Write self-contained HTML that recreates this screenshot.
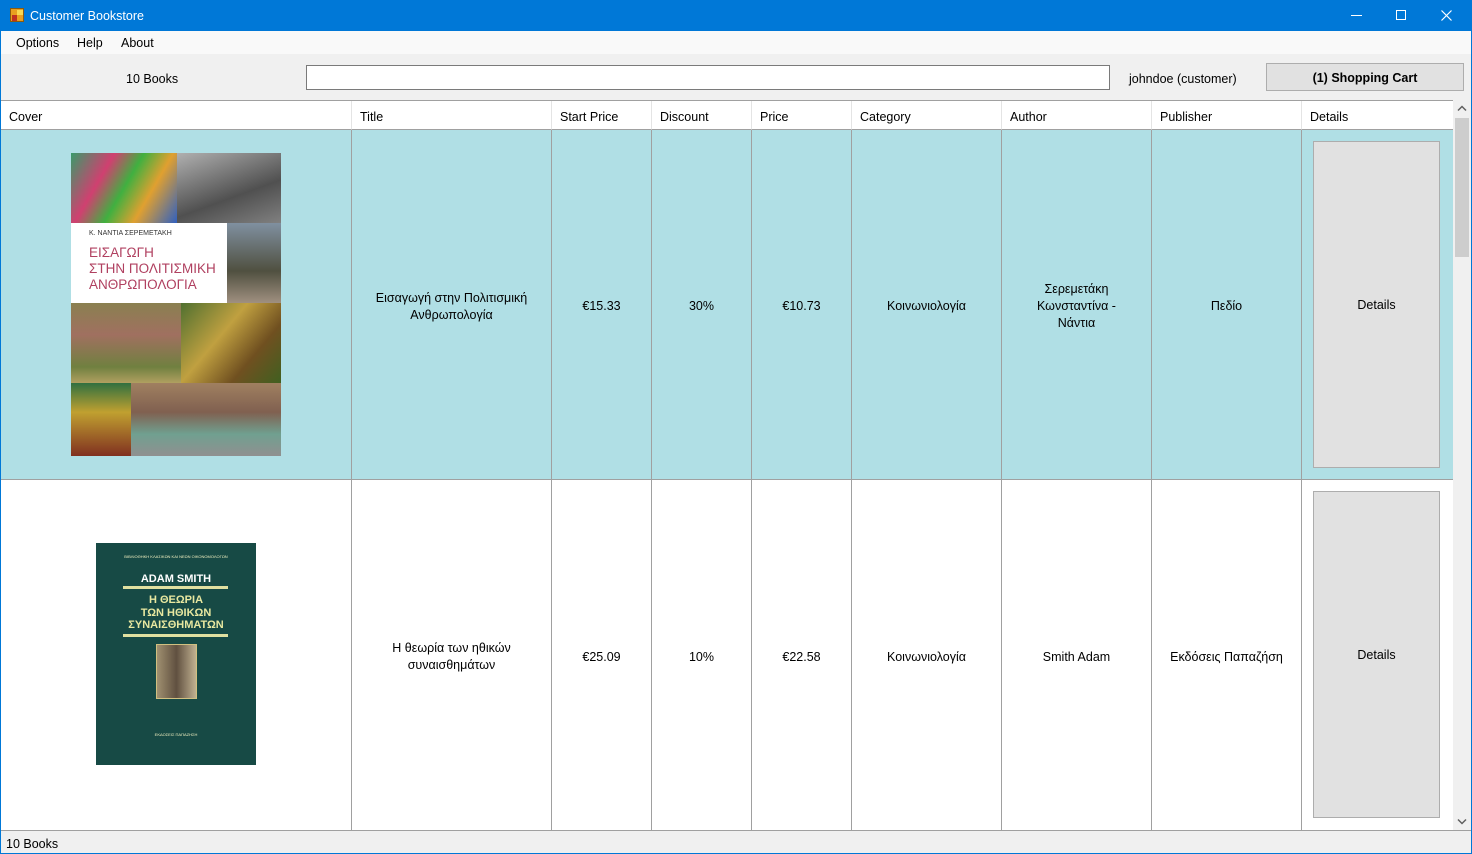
<!DOCTYPE html>
<html><head><meta charset="utf-8"><style>
*{box-sizing:border-box;margin:0;padding:0}
body{width:1472px;height:854px;overflow:hidden;background:#f0f0f0;font-family:"Liberation Sans","DejaVu Sans",sans-serif;font-size:12.5px;color:#000;position:relative}
.a{position:absolute}
.title{left:0;top:0;width:1472px;height:31px;background:#0078d7;color:#fff}
.menu{left:1px;top:31px;width:1470px;height:23px;background:#f9f9f9}
.grid{left:1px;top:100px;width:1452px;height:730px;background:#fff;border-top:1px solid #a0a0a0;overflow:hidden}
.hd{top:0;height:29px;border-right:1px solid #e4e4e4;border-bottom:1px solid #a0a0a0;padding:9px 0 0 8px;background:#fff}
.cell{border-right:1px solid #a0a0a0;border-bottom:1px solid #a0a0a0;display:flex;align-items:center;justify-content:center;text-align:center;line-height:17px;padding-top:4px}
.sel{background:#b0dfe5}
.btn{background:#e1e1e1;border:1px solid #adadad}
</style></head><body>
<div class="a title">
 <div class="a" style="left:10px;top:8px;width:14px;height:14px;background:#e8a020;border:1px solid #8a5a10"><div class="a" style="left:1px;top:6px;width:5px;height:6px;background:#c03020"></div><div class="a" style="left:6px;top:1px;width:6px;height:5px;background:#f8d850"></div></div>
 <div class="a" style="left:30px;top:9px;font-size:12.5px">Customer Bookstore</div>
 <div class="a" style="left:1351px;top:15px;width:11px;height:1px;background:#fff"></div>
 <div class="a" style="left:1396px;top:10px;width:10px;height:10px;border:1px solid #fff"></div>
 <svg class="a" style="left:1441px;top:10px" width="11" height="11"><path d="M0.5 0.5L10.5 10.5M10.5 0.5L0.5 10.5" stroke="#fff" stroke-width="1.2"/></svg>
</div>
<div class="a" style="left:0;top:31px;width:1px;height:823px;background:#0078d7"></div>
<div class="a" style="left:1471px;top:31px;width:1px;height:823px;background:#0078d7"></div>
<div class="a" style="left:0;top:853px;width:1472px;height:1px;background:#0078d7"></div>
<div class="a menu"><span class="a" style="left:15px;top:5px">Options</span><span class="a" style="left:76px;top:5px">Help</span><span class="a" style="left:120px;top:5px">About</span></div>
<div class="a" style="left:126px;top:72px">10 Books</div>
<div class="a" style="left:306px;top:65px;width:804px;height:25px;background:#fff;border:1px solid #7a7a7a"></div>
<div class="a" style="left:1129px;top:72px">johndoe (customer)</div>
<div class="a btn" style="left:1266px;top:63px;width:198px;height:28px;text-align:center;line-height:28px;font-weight:bold">(1) Shopping Cart</div>
<div class="a grid">
 <div class="a hd" style="left:0;width:351px">Cover</div>
 <div class="a hd" style="left:351px;width:200px">Title</div>
 <div class="a hd" style="left:551px;width:100px">Start Price</div>
 <div class="a hd" style="left:651px;width:100px">Discount</div>
 <div class="a hd" style="left:751px;width:100px">Price</div>
 <div class="a hd" style="left:851px;width:150px">Category</div>
 <div class="a hd" style="left:1001px;width:150px">Author</div>
 <div class="a hd" style="left:1151px;width:150px">Publisher</div>
 <div class="a hd" style="left:1301px;width:151px;border-right:none">Details</div>
 <!-- row1 -->
 <div class="a cell sel" style="left:0;top:29px;width:351px;height:350px"></div>
 <div class="a cell sel" style="left:351px;top:29px;width:200px;height:350px">Εισαγωγή στην Πολιτισμική<br>Ανθρωπολογία</div>
 <div class="a cell sel" style="left:551px;top:29px;width:100px;height:350px">€15.33</div>
 <div class="a cell sel" style="left:651px;top:29px;width:100px;height:350px">30%</div>
 <div class="a cell sel" style="left:751px;top:29px;width:100px;height:350px">€10.73</div>
 <div class="a cell sel" style="left:851px;top:29px;width:150px;height:350px">Κοινωνιολογία</div>
 <div class="a cell sel" style="left:1001px;top:29px;width:150px;height:350px">Σερεμετάκη<br>Κωνσταντίνα -<br>Νάντια</div>
 <div class="a cell sel" style="left:1151px;top:29px;width:150px;height:350px">Πεδίο</div>
 <div class="a cell sel" style="left:1301px;top:29px;width:151px;height:350px;border-right:none"><div class="a btn" style="left:11px;top:11px;width:127px;height:327px;display:flex;align-items:center;justify-content:center;padding-top:2px">Details</div></div>
 <!-- row2 -->
 <div class="a cell" style="left:0;top:379px;width:351px;height:351px"></div>
 <div class="a cell" style="left:351px;top:379px;width:200px;height:351px">Η θεωρία των ηθικών<br>συναισθημάτων</div>
 <div class="a cell" style="left:551px;top:379px;width:100px;height:351px">€25.09</div>
 <div class="a cell" style="left:651px;top:379px;width:100px;height:351px">10%</div>
 <div class="a cell" style="left:751px;top:379px;width:100px;height:351px">€22.58</div>
 <div class="a cell" style="left:851px;top:379px;width:150px;height:351px">Κοινωνιολογία</div>
 <div class="a cell" style="left:1001px;top:379px;width:150px;height:351px">Smith Adam</div>
 <div class="a cell" style="left:1151px;top:379px;width:150px;height:351px">Εκδόσεις Παπαζήση</div>
 <div class="a cell" style="left:1301px;top:379px;width:151px;height:351px;border-right:none"><div class="a btn" style="left:11px;top:11px;width:127px;height:327px;display:flex;align-items:center;justify-content:center;padding-top:2px">Details</div></div>
</div>
<!-- book 1 -->
<div class="a" style="left:71px;top:153px;width:210px;height:303px;background:#6a7050;overflow:hidden">
 <div class="a" style="left:0;top:0;width:106px;height:70px;background:linear-gradient(120deg,#3a9a6a,#d04070 30%,#40b040 50%,#e0a030 70%,#3060c0)"></div>
 <div class="a" style="left:106px;top:0;width:104px;height:70px;background:linear-gradient(160deg,#b0b0b0,#505050 60%,#808080)"></div>
 <div class="a" style="left:0;top:70px;width:156px;height:80px;background:#fff"></div>
 <div class="a" style="left:156px;top:70px;width:54px;height:80px;background:linear-gradient(#8090a0,#505040 60%,#a09080)"></div>
 <div class="a" style="left:18px;top:77px;font-size:7px;color:#333">Κ. ΝΑΝΤΙΑ ΣΕΡΕΜΕΤΑΚΗ</div>
 <div class="a" style="left:18px;top:92px;font-size:13.5px;line-height:16px;color:#b04060">ΕΙΣΑΓΩΓΗ<br>ΣΤΗΝ ΠΟΛΙΤΙΣΜΙΚΗ<br>ΑΝΘΡΩΠΟΛΟΓΙΑ</div>
 <div class="a" style="left:0;top:150px;width:110px;height:80px;background:linear-gradient(#8a8050,#a07060 40%,#708040 80%,#b0a060)"></div>
 <div class="a" style="left:110px;top:150px;width:100px;height:80px;background:linear-gradient(130deg,#507030,#c0a040 40%,#705020 70%,#406020)"></div>
 <div class="a" style="left:0;top:230px;width:60px;height:73px;background:linear-gradient(#307040,#c0a030 40%,#803020)"></div>
 <div class="a" style="left:60px;top:230px;width:150px;height:73px;background:linear-gradient(#a08060,#806050 40%,#70a090 70%,#909090)"></div>
</div>
<!-- book 2 -->
<div class="a" style="left:96px;top:543px;width:160px;height:222px;background:#174a45;color:#f0f0c0;text-align:center;font-weight:bold">
 <div class="a" style="left:0;top:11px;width:160px;font-size:4px;font-weight:normal">ΒΙΒΛΙΟΘΗΚΗ ΚΛΑΣΙΚΩΝ ΚΑΙ ΝΕΩΝ ΟΙΚΟΝΟΜΟΛΟΓΩΝ</div>
 <div class="a" style="left:0;top:30px;width:160px;font-size:11px;color:#fff">ADAM SMITH</div>
 <div class="a" style="left:27px;top:43px;width:105px;height:3px;background:#e0e0a0"></div>
 <div class="a" style="left:0;top:51px;width:160px;font-size:11px;line-height:12.5px;color:#e8e8a0">Η ΘΕΩΡΙΑ<br>ΤΩΝ ΗΘΙΚΩΝ<br>ΣΥΝΑΙΣΘΗΜΑΤΩΝ</div>
 <div class="a" style="left:27px;top:91px;width:105px;height:3px;background:#e0e0a0"></div>
 <div class="a" style="left:60px;top:101px;width:41px;height:55px;background:linear-gradient(90deg,#a09070,#605040 50%,#c0b090);border:1px solid #d0c080"></div>
 <div class="a" style="left:0;top:189px;width:160px;font-size:4px;font-weight:normal">ΕΚΔΟΣΕΙΣ ΠΑΠΑΖΗΣΗ</div>
</div>
<!-- scrollbar -->
<div class="a" style="left:1453px;top:100px;width:18px;height:730px;background:#f0f0f0"></div>
<div class="a" style="left:1455px;top:118px;width:14px;height:139px;background:#cdcdcd"></div>
<svg class="a" style="left:1457px;top:105px" width="10" height="7"><path d="M1 5.5L5 1.5L9 5.5" stroke="#606060" stroke-width="1.5" fill="none"/></svg>
<svg class="a" style="left:1457px;top:818px" width="10" height="7"><path d="M1 1.5L5 5.5L9 1.5" stroke="#606060" stroke-width="1.5" fill="none"/></svg>
<div class="a" style="left:1px;top:830px;width:1470px;height:1px;background:#a0a0a0"></div>
<div class="a" style="left:6px;top:837px">10 Books</div>
</body></html>
